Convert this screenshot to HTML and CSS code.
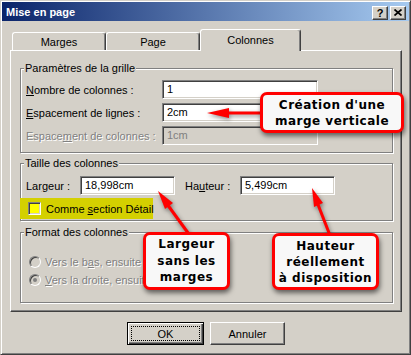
FILE: index.html
```html
<!DOCTYPE html>
<html lang="fr">
<head>
  <meta charset="UTF-8" />
  <title>Mise en page</title>
  <link rel="stylesheet" href="styles.css">
</head>
<body>

  <div class="window">

    <!-- Barre de titre -->
    <div class="titlebar">
      <span class="title">Mise en page</span>
      <div class="title-buttons">
        <span class="tbtn">?</span>
        <span class="tbtn">
          <svg width="8" height="7" viewBox="0 0 8 7">
            <path d="M0.5 0.5 L7.5 6.5 M7.5 0.5 L0.5 6.5" stroke="#000" stroke-width="1.7" fill="none" />
          </svg>
        </span>
      </div>
    </div>

    <div class="body">

      <!-- Onglets -->
      <div class="tabs">
        <div class="tab">Marges</div>
        <div class="tab">Page</div>
        <div class="tab active">Colonnes</div>
      </div>

      <div class="panel">

        <fieldset class="group grid">
          <legend>Paramètres de la grille</legend>
          <div class="row">
            <span class="label"><u>N</u>ombre de colonnes :</span>
            <span class="field">1</span>
          </div>
          <div class="row">
            <span class="label"><u>E</u>spacement de lignes :</span>
            <span class="field">2cm</span>
          </div>
          <div class="row">
            <span class="label disabled">Espace<u>m</u>ent de colonnes :</span>
            <span class="field off">1cm</span>
          </div>
        </fieldset>

        <fieldset class="group size">
          <legend>Taille des colonnes</legend>
          <div class="size-row">
            <span class="label small">Lar<u>g</u>eur :</span>
            <span class="field short">18,998cm</span>
            <span class="label small gap">Ha<u>u</u>teur :</span>
            <span class="field short">5,499cm</span>
          </div>
          <div class="check-row">
            <span class="checkbox"></span>
            <span class="check-text">Comme <u>s</u>ection Détail</span>
          </div>
        </fieldset>

        <fieldset class="group format">
          <legend>Format des colonnes</legend>
          <div class="radio-row disabled">
            <span class="radio"></span>
            <span>Vers le b<u>a</u>s, ensuite vers la droite</span>
          </div>
          <div class="radio-row disabled">
            <span class="radio checked"></span>
            <span><u>V</u>ers la droite, ensuite vers le bas</span>
          </div>
        </fieldset>

      </div>

      <div class="buttons">
        <span class="btn default">OK</span>
        <span class="btn">Annuler</span>
      </div>

    </div>

    <!-- Annotations -->
    <svg class="arrows" width="411" height="355" viewBox="0 0 411 355">
      <g fill="#f00" stroke="#f00">
        <line x1="226" y1="113" x2="266" y2="113" stroke-width="3" />
        <polygon points="207,113 229,108 229,118" stroke="none" />
        <line x1="167" y1="204" x2="191" y2="237" stroke-width="3" />
        <polygon points="158,191 165,209 173,203" stroke="none" />
        <line x1="317" y1="202" x2="331" y2="238" stroke-width="3" />
        <polygon points="312,188 314,207 323,203" stroke="none" />
      </g>
    </svg>

    <div class="callout c1">Création d'une<br>marge verticale</div>
    <div class="callout c2">Largeur<br>sans les<br>marges</div>
    <div class="callout c3">Hauteur<br>réellement<br>à disposition</div>

  </div>

</body>
</html>
```

FILE: styles.css
```css
body {
  margin: 0;
  font-family: "Liberation Sans", Arial, sans-serif;
  font-size: 11px;
  color: #000;
  background-color: #d4d0c8;
}

/* Fenêtre */
.window {
  position: relative;
  width: 411px;
  height: 355px;
  box-sizing: border-box;
  border: 1px solid;
  border-color: #d4d0c8 #404040 #404040 #d4d0c8;
  box-shadow: inset 1px 1px #fff, inset -1px -1px #808080;
  padding: 1px;
  background-color: #d4d0c8;
}

/* Barre de titre */
.titlebar {
  height: 19px;
  display: flex;
  align-items: center;
  justify-content: space-between;
  padding: 0 3px 0 4px;
  background: linear-gradient(to right, #0a246a, #a6caf0);
  color: #fff;
  font-weight: bold;
}

.title-buttons {
  display: flex;
  gap: 2px;
  margin-top: 2px;
}

.tbtn {
  width: 16px;
  height: 14px;
  box-sizing: border-box;
  border: 1px solid;
  border-color: #fff #404040 #404040 #fff;
  box-shadow: inset -1px -1px #808080;
  background-color: #d4d0c8;
  color: #000;
  display: flex;
  align-items: center;
  justify-content: center;
  font-size: 11px;
  font-weight: bold;
}

.body {
  padding: 8px 7px 0 8px;
}

/* Onglets */
.tabs {
  display: flex;
  align-items: flex-end;
  height: 21px;
  padding-left: 2px;
}

.tab {
  width: 94px;
  height: 18px;
  box-sizing: border-box;
  border: 1px solid;
  border-bottom: none;
  border-color: #fff #404040 #fff #fff;
  box-shadow: inset -1px 0 #808080;
  border-radius: 3px 3px 0 0;
  display: flex;
  align-items: center;
  justify-content: center;
  padding-top: 1px;
}

.tab.active {
  width: 101px;
  height: 22px;
  margin-bottom: -1px;
  padding-top: 0;
  padding-bottom: 2px;
  position: relative;
  z-index: 1;
  background-color: #d4d0c8;
}

/* Panneau */
.panel {
  height: 262px;
  box-sizing: border-box;
  border: 1px solid;
  border-color: #fff #404040 #404040 #fff;
  box-shadow: inset -1px -1px #808080;
  padding: 10px 8px 0 9px;
}

.group {
  margin: 0;
  padding: 0 5px;
  min-width: 0;
  border: 1px solid #808080;
  box-shadow: inset 1px 1px #fff, 1px 1px #fff;
}

.group legend {
  padding: 0 1px;
  margin-left: -2px;
  line-height: 14px;
  background-color: #d4d0c8;
}

.grid {
  padding-top: 5px;
  padding-bottom: 7px;
  display: flex;
  flex-direction: column;
  gap: 4px;
}

.size {
  margin-top: 3px;
  padding-top: 6px;
  padding-bottom: 1px;
}

.format {
  margin-top: 4px;
  padding-top: 14px;
  padding-bottom: 13px;
}

.row,
.size-row {
  display: flex;
  align-items: center;
}

.label {
  width: 136px;
  white-space: nowrap;
}

.label.small {
  width: 54px;
}

.label.gap {
  width: 55px;
  margin-left: 10px;
}

.disabled {
  color: #808080;
  text-shadow: 1px 1px 0 #fff;
}

/* Champs */
.field {
  width: 156px;
  height: 19px;
  box-sizing: border-box;
  border: 1px solid;
  border-color: #808080 #fff #fff #808080;
  box-shadow: inset 1px 1px #404040, inset -1px -1px #d4d0c8;
  background-color: #fff;
  padding-left: 4px;
  line-height: 17px;
}

.field.short {
  width: 95px;
}

.field.off {
  background-color: #d4d0c8;
  color: #808080;
}

/* Case à cocher surlignée */
.check-row {
  display: flex;
  align-items: center;
  gap: 5px;
  width: 133px;
  height: 21px;
  box-sizing: border-box;
  margin: 3px 0 0 -6px;
  padding-left: 8px;
  background-color: #d4d000;
}

.check-text {
  white-space: nowrap;
}

.checkbox {
  flex-shrink: 0;
  width: 13px;
  height: 13px;
  box-sizing: border-box;
  border: 1px solid;
  border-color: #808080 #fff #fff #808080;
  box-shadow: inset 1px 1px #404040, inset -1px -1px #d4d0c8;
  background-color: #ffff00;
}

/* Boutons radio */
.radio-row {
  display: flex;
  align-items: center;
  gap: 4px;
  height: 18px;
  padding-left: 3px;
  white-space: nowrap;
}

.radio {
  position: relative;
  flex-shrink: 0;
  width: 12px;
  height: 12px;
  box-sizing: border-box;
  border-radius: 50%;
  border: 1px solid;
  border-color: #808080 #fff #fff #808080;
  box-shadow: inset 1px 1px #404040;
  background-color: #d4d0c8;
}

.radio.checked::after {
  content: "";
  position: absolute;
  left: 3px;
  top: 3px;
  width: 4px;
  height: 4px;
  border-radius: 50%;
  background-color: #808080;
}

/* Boutons */
.buttons {
  display: flex;
  justify-content: center;
  gap: 6px;
  margin-top: 10px;
}

.btn {
  position: relative;
  width: 75px;
  height: 23px;
  box-sizing: border-box;
  border: 1px solid;
  border-color: #fff #404040 #404040 #fff;
  box-shadow: inset -1px -1px #808080;
  display: flex;
  align-items: center;
  justify-content: center;
}

.btn.default {
  width: 77px;
  border-color: #000;
  box-shadow: inset 1px 1px #fff, inset -1px -1px #404040, inset -2px -2px #808080;
}

.btn.default::after {
  content: "";
  position: absolute;
  inset: 3px;
  border: 1px dotted #000;
}

/* Annotations */
.arrows {
  position: absolute;
  left: -1px;
  top: -1px;
  filter: drop-shadow(1px 2px 2px rgba(0, 0, 0, 0.45));
}

.callout {
  position: absolute;
  box-sizing: border-box;
  border: 3px solid #f00;
  border-radius: 7px;
  background-color: #f8f8f8;
  box-shadow: 1px 3px 5px rgba(0, 0, 0, 0.55);
  font-family: "DejaVu Sans", Verdana, sans-serif;
  font-weight: bold;
  font-size: 12px;
  letter-spacing: 0.5px;
  line-height: 16px;
  text-align: center;
  display: flex;
  align-items: center;
  justify-content: center;
}

.c1 {
  left: 259px;
  top: 91px;
  width: 144px;
  height: 41px;
}

.c2 {
  left: 142px;
  top: 231px;
  width: 87px;
  height: 58px;
  line-height: 16.5px;
}

.c3 {
  left: 271px;
  top: 232px;
  width: 107px;
  height: 57px;
}
```
